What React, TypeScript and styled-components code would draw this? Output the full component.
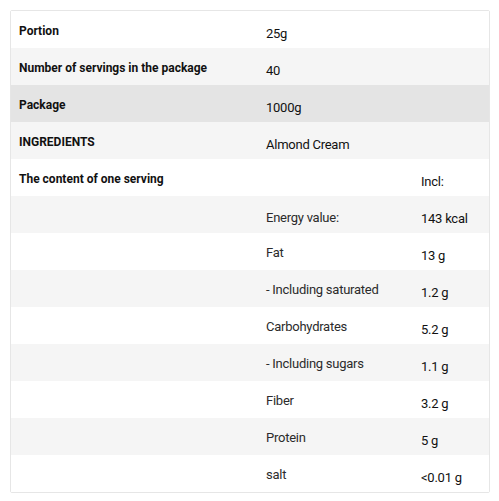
import React from "react";
import styled, { createGlobalStyle } from "styled-components";

const Global = createGlobalStyle`
  html, body { margin: 0; padding: 0; background: #ffffff; }
  body { font-family: Roboto, "Liberation Sans", Arial, sans-serif; }
`;

const Page = styled.div`
  padding: 10px;
`;

const Table = styled.div`
  width: 480px;
  box-sizing: border-box;
  border: 1px solid #e6e6e6;
  border-radius: 2px;
  display: flex;
  flex-direction: column;
`;

const Row = styled.div<{ $tone: "white" | "light" | "dark" }>`
  display: grid;
  grid-template-columns: 247px 155px 1fr;
  height: 37px;
  background: ${(p) =>
    p.$tone === "dark" ? "#e4e4e4" : p.$tone === "light" ? "#f5f5f5" : "#ffffff"};
`;

const Head = styled.div`
  padding: 13px 0 0 8px;
  font-size: 12px;
  line-height: 14px;
  font-weight: 700;
  color: #111111;
`;

const Label = styled.div<{ $drop?: number }>`
  padding: ${(p) => 12 + (p.$drop ?? 0)}px 0 0 8px;
  font-size: 13px;
  line-height: 15px;
  letter-spacing: -0.25px;
  color: #2b2b2b;
`;

const Value = styled.div<{ $span?: boolean }>`
  grid-column: ${(p) => (p.$span ? "2 / 4" : "auto")};
  padding: 15px 0 0 8px;
  font-size: 13px;
  line-height: 15px;
  letter-spacing: -0.25px;
  color: #111111;
`;

const Empty = styled.div``;

const top: [string, string][] = [
  ["Portion", "25g"],
  ["Number of servings in the package", "40"],
  ["Package", "1000g"],
  ["INGREDIENTS", "Almond Cream"],
];

const nutrients: [string, string, number][] = [
  ["Energy value:", "143 kcal", 2],
  ["Fat", "13 g", 0],
  ["- Including saturated", "1.2 g", 0],
  ["Carbohydrates", "5.2 g", 0],
  ["- Including sugars", "1.1 g", 0],
  ["Fiber", "3.2 g", 0],
  ["Protein", "5 g", 0],
  ["salt", "<0.01 g", 0],
];

const toneFor = (i: number): "white" | "light" | "dark" =>
  i === 2 ? "dark" : i % 2 === 1 ? "light" : "white";

export default function App() {
  return (
    <Page>
      <Global />
      <Table>
        {top.map(([k, v], i) => (
          <Row key={k} $tone={toneFor(i)}>
            <Head>{k}</Head>
            <Value $span>{v}</Value>
          </Row>
        ))}
        <Row $tone={toneFor(4)}>
          <Head>The content of one serving</Head>
          <Empty />
          <Value>Incl:</Value>
        </Row>
        {nutrients.map(([k, v, d], j) => (
          <Row key={k} $tone={toneFor(5 + j)}>
            <Empty />
            <Label $drop={d}>{k}</Label>
            <Value>{v}</Value>
          </Row>
        ))}
      </Table>
    </Page>
  );
}
